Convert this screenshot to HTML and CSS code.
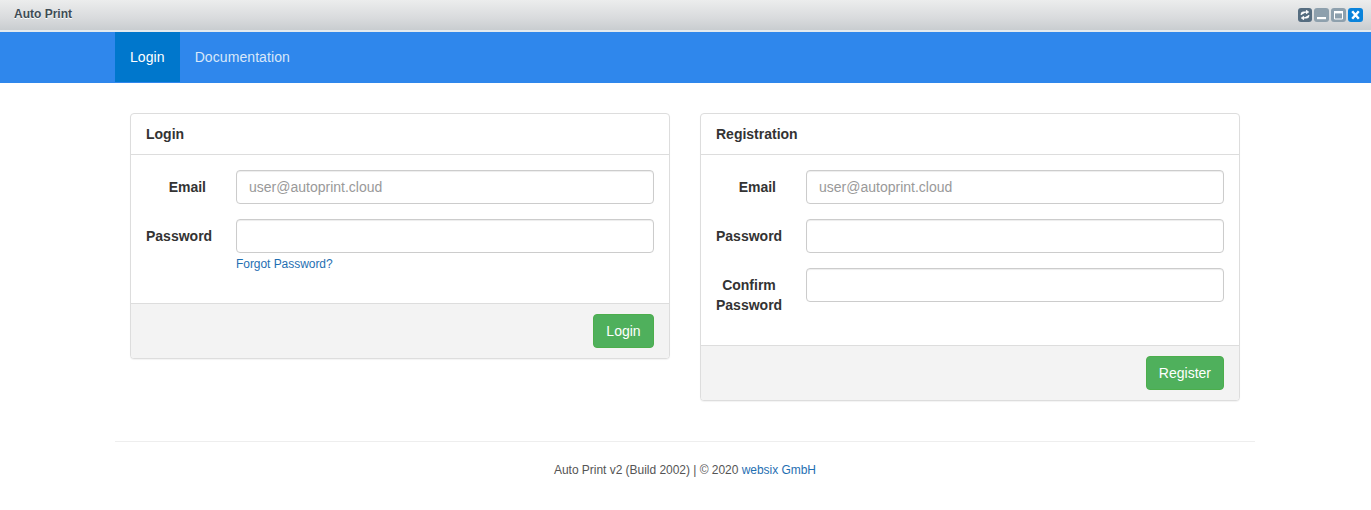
FILE: index.html
```html
<!DOCTYPE html>
<html lang="en">
<head>
<meta charset="utf-8">
<title>Auto Print</title>
<link rel="stylesheet" href="styles.css">
</head>
<body>
<header class="titlebar">
  <span class="app-title">Auto Print</span>
  <div class="win-buttons">
    <span class="win-btn refresh"><svg viewBox="0 0 14 14"><path d="M3.2 7 V6 A2 2 0 0 1 5.2 4 H8.5 M8.4 2.4 L10.6 4 L8.4 5.6 Z M10.8 7 V8 A2 2 0 0 1 8.8 10 H5.5 M5.6 8.4 L3.4 10 L5.6 11.6 Z" fill="#fff" stroke="#fff" stroke-width="1"/></svg></span>
    <span class="win-btn grey wide"><svg viewBox="0 0 15 14"><rect x="3" y="9" width="9" height="2.2" fill="#fff"/></svg></span>
    <span class="win-btn grey wide"><svg viewBox="0 0 15 14"><path d="M3.5 3.5h8v7.5h-8z" fill="none" stroke="#fff" stroke-width="1"/><rect x="3" y="3" width="9" height="2.4" fill="#fff"/></svg></span>
    <span class="win-btn close wide"><svg viewBox="0 0 15 14"><path d="M4.2 3.2 L10.8 10.8 M10.8 3.2 L4.2 10.8" stroke="#fff" stroke-width="2.4"/></svg></span>
  </div>
</header>
<nav class="navbar">
  <div class="nav-inner">
    <a class="nav-link active">Login</a>
    <a class="nav-link">Documentation</a>
  </div>
</nav>
<main class="container">
  <section class="panel">
    <h2 class="panel-head">Login</h2>
    <div class="panel-body">
      <div class="row">
        <label class="lbl lbl-short">Email</label>
        <div class="field"><input class="input" placeholder="user@autoprint.cloud"></div>
      </div>
      <div class="row">
        <label class="lbl">Password</label>
        <div class="field"><input class="input" type="password"><a class="forgot">Forgot Password?</a></div>
      </div>
    </div>
    <div class="panel-foot"><button class="btn btn-login">Login</button></div>
  </section>
  <section class="panel">
    <h2 class="panel-head">Registration</h2>
    <div class="panel-body">
      <div class="row">
        <label class="lbl lbl-short">Email</label>
        <div class="field"><input class="input" placeholder="user@autoprint.cloud"></div>
      </div>
      <div class="row">
        <label class="lbl">Password</label>
        <div class="field"><input class="input" type="password"></div>
      </div>
      <div class="row">
        <label class="lbl">Confirm Password</label>
        <div class="field"><input class="input" type="password"></div>
      </div>
    </div>
    <div class="panel-foot"><button class="btn">Register</button></div>
  </section>
</main>
<footer class="footer">
  <div class="footer-text">Auto Print v2 (Build 2002) | © 2020 <a class="link">websix GmbH</a></div>
</footer>
</body>
</html>
```
FILE: styles.css
```css
* { box-sizing: border-box; }
html, body { margin: 0; padding: 0; background: #fff; }
body { font-family: "Liberation Sans", Arial, sans-serif; font-size: 14px; color: #333; line-height: 20px; width: 1371px; height: 510px; overflow: hidden; }
.titlebar { height: 32px; display: flex; align-items: center; justify-content: space-between; padding: 0 8px 2px 14px; background: linear-gradient(#eceded, #d9dbdd 60%, #c9cdd0); border-bottom: 2px solid; border-image: linear-gradient(#a3b5c0 50%, #e4eaee 50%) 1; }
.app-title { font-size: 12px; font-weight: 700; color: #3f4c55; text-shadow: 0 1px 0 #fff; }
.win-buttons { display: flex; gap: 2px; margin-top: 2px; }
.win-btn { width: 14px; height: 14px; border-radius: 3px; display: block; margin-right: 1px; }
.win-btn.wide { width: 15px; margin-right: 0; }
.win-btn svg { display: block; width: 100%; height: 100%; }
.refresh { background: #566d80; margin-right: 0; }
.grey { background: #8ea0ad; }
.close { background: #0a83db; }
.navbar { height: 51px; background: #2f87ec; }
.nav-inner { width: 1140px; margin-left: 115px; display: flex; height: 50px; }
.nav-link { padding: 15px; color: #d8e7fa; font-size: 14px; letter-spacing: .08px; }
.nav-link.active { background: #0077cc; color: #fff; }
.container { width: 1140px; margin: 30px 0 0 115px; padding: 0 15px; display: grid; grid-template-columns: 540px 540px; column-gap: 30px; align-items: start; height: 329px; border-bottom: 1px solid #eee; }
.panel { border: 1px solid #ddd; border-radius: 4px; background: #fff; box-shadow: 0 1px 1px rgba(0,0,0,.05); }
.panel-head { margin: 0; padding: 10px 15px; height: 41px; font-size: 14px; font-weight: 700; line-height: 20px; color: #333; border-bottom: 1px solid #ddd; }
.panel-body { padding: 15px; }
.row { display: flex; margin-bottom: 15px; }
.lbl { width: 66px; margin-right: 24px; flex: none; padding-top: 7px; font-weight: 700; text-align: center; }
.lbl-short { text-align: right; padding-right: 6px; }
.field { flex: 1; }
.input { display: block; width: 100%; height: 34px; padding: 6px 12px; border: 1px solid #ccc; border-radius: 4px; font: 14px/20px "Liberation Sans", Arial, sans-serif; color: #555; background: #fff; box-shadow: inset 0 1px 1px rgba(0,0,0,.075); outline: none; }
.input::placeholder { color: #999; opacity: 1; }
.forgot { display: block; height: 20px; font-size: 12px; line-height: 22px; letter-spacing: -.05px; color: #1f6fb2; }
.panel-foot { display: flex; justify-content: flex-end; padding: 10px 15px; height: 55px; background: #f3f3f3; border-top: 1px solid #ddd; border-radius: 0 0 3px 3px; }
.btn { height: 34px; padding: 6px 12px; border: 1px solid #4cae4c; border-radius: 4px; background: #4fb05c; color: #fff; font: 14px/20px "Liberation Sans", Arial, sans-serif; }
.btn-login { min-width: 61px; }
.footer { width: 1140px; margin-left: 115px; padding-top: 18px; text-align: center; }
.footer-text { font-size: 12px; line-height: 20px; color: #555; letter-spacing: -.03px; }
.link { color: #1f6fb2; }
```
